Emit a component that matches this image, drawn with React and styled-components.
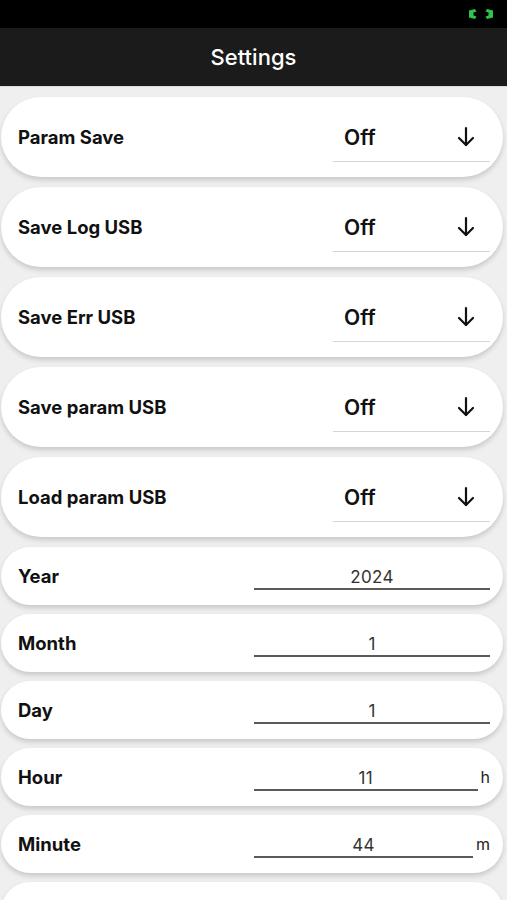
import React from 'react';
import styled, { createGlobalStyle } from 'styled-components';

const GlobalStyle = createGlobalStyle`
  body {
    margin: 0;
    background: #efefef;
    font-family: Inter, "Liberation Sans", Arial, sans-serif;
  }
`;

const Page = styled.div`
  width: 507px;
  height: 900px;
  overflow: hidden;
  background: #efefef;
`;

const StatusBar = styled.div`
  height: 28px;
  background: #000;
  display: flex;
  align-items: center;
  justify-content: flex-end;
  padding-right: 14px;
`;

const Header = styled.div`
  height: 58px;
  background: #1b1b1b;
  color: #fff;
  display: flex;
  align-items: center;
  justify-content: center;
  font-size: 22px;
  font-weight: 500;
  border-bottom: 1px solid #dcdcdc;
`;

const List = styled.div`
  display: flex;
  flex-direction: column;
  gap: 10px;
  padding: 10px 4px 0 1px;
`;

const Card = styled.div`
  height: ${p => (p.$tall ? 80 : 58)}px;
  background: #fff;
  border-radius: ${p => (p.$tall ? 40 : 29)}px;
  box-shadow: 0 3px 5px rgba(0, 0, 0, 0.16);
  display: flex;
  align-items: center;
  padding: 0 13px 0 17px;
  margin-bottom: ${p => (p.$tall ? 0 : -1)}px;
`;

const Label = styled.div`
  flex: 1;
  font-size: 18.5px;
  font-weight: 700;
  color: #111;
`;

const Select = styled.div`
  width: 157px;
  height: 44px;
  margin-top: 5px;
  box-sizing: border-box;
  border-bottom: 1.5px solid #d6d6d6;
  display: flex;
  align-items: center;
  justify-content: space-between;
  padding: 0 14px 4px 11px;
  font-size: 21px;
  font-weight: 600;
  color: #111;
`;

const Field = styled.div`
  width: 236px;
  display: flex;
  align-items: flex-end;
  margin-top: 4px;
`;

const Input = styled.div`
  flex: 1;
  text-align: center;
  font-size: 17px;
  color: #333;
  border-bottom: 2px solid #5a5a5a;
  padding-bottom: 1px;
  letter-spacing: 0.3px;
`;

const Unit = styled.span`
  font-size: 16px;
  color: #222;
  margin-left: 3px;
  padding-bottom: 4px;
`;

const ArrowDown = () => (
  <svg width="20" height="22" viewBox="0 0 20 22" fill="none" stroke="#111" strokeWidth="2.2" strokeLinecap="round" strokeLinejoin="round">
    <path d="M10 2v17" />
    <path d="M3 12l7 7 7-7" />
  </svg>
);

const StatusIcon = () => (
  <svg width="24" height="10" viewBox="0 0 24 10" fill="#2ec24f">
    <path d="M0 1.5 L6 0 L7.5 2.5 L4.5 3.5 L4.5 6.5 L7.5 7.5 L6 10 L0 8.5 Z" />
    <path d="M24 1.5 L18 0 L16.5 2.5 L19.5 3.5 L19.5 6.5 L16.5 7.5 L18 10 L24 8.5 Z" />
  </svg>
);

const selects = ['Param Save', 'Save Log USB', 'Save Err USB', 'Save param USB', 'Load param USB'];

const fields = [
  { label: 'Year', value: '2024' },
  { label: 'Month', value: '1' },
  { label: 'Day', value: '1' },
  { label: 'Hour', value: '11', unit: 'h' },
  { label: 'Minute', value: '44', unit: 'm' },
];

export default function App() {
  return (
    <Page>
      <GlobalStyle />
      <StatusBar>
        <StatusIcon />
      </StatusBar>
      <Header>Settings</Header>
      <List>
        {selects.map(s => (
          <Card $tall key={s}>
            <Label>{s}</Label>
            <Select>
              <span>Off</span>
              <ArrowDown />
            </Select>
          </Card>
        ))}
        {fields.map(f => (
          <Card key={f.label}>
            <Label>{f.label}</Label>
            <Field>
              <Input>{f.value}</Input>
              {f.unit && <Unit>{f.unit}</Unit>}
            </Field>
          </Card>
        ))}
        <Card />
      </List>
    </Page>
  );
}
